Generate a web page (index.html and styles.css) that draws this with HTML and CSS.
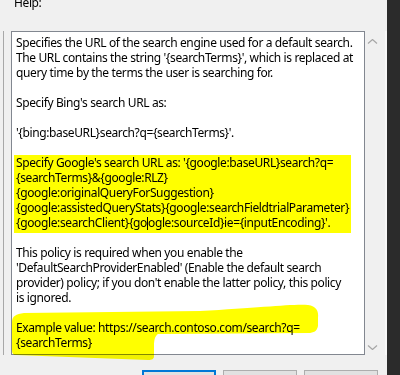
FILE: index.html
```html
<!DOCTYPE html>
<html>
<head>
<meta charset="utf-8">
<link rel="stylesheet" href="styles.css">
</head>
<body>
<div class="window">
  <div class="content">
    <div class="help-label">Help:</div>
    <div class="main">
      <div class="left-pane"></div>
      <div class="textbox">
        <p>Specifies the URL of the search engine used for a default search.<br>The URL contains the string '{searchTerms}', which is replaced at<br>query time by the terms the user is searching for.</p>
        <p>Specify Bing's search URL as:</p>
        <p>'{bing:baseURL}search?q={searchTerms}'.</p>
        <p class="marked">Specify Google's search URL as: '{google:baseURL}search?q=<br>{searchTerms}&amp;{google:RLZ}<br>{google:originalQueryForSuggestion}<br>{google:assistedQueryStats}{google:searchFieldtrialParameter}<br>{google:searchClient}{go<span class="caret"></span>ogle:sourceId}ie={inputEncoding}'.</p>
        <p>This policy is required when you enable the<br>'DefaultSearchProviderEnabled' (Enable the default search<br>provider) policy; if you don't enable the latter policy, this policy<br>is ignored.</p>
        <p>Example value: https://search.contoso.com/search?q=<br>{searchTerms}</p>
      </div>
      <div class="scroller">
        <svg class="chev" width="20" height="5" viewBox="0 0 20 5"><polyline points="3,4.5 7.5,0.5 12,4.5" fill="none" stroke="#a6a6a6" stroke-width="1.2"/></svg>
        <svg class="chev" width="20" height="5" viewBox="0 0 20 5"><polyline points="3,0.5 7.5,4.5 12,0.5" fill="none" stroke="#a6a6a6" stroke-width="1.2"/></svg>
      </div>
    </div>
    <div class="buttons">
      <div class="btn btn-default"></div>
      <div class="btn"></div>
      <div class="btn"></div>
    </div>
  </div>
  <div class="dark-strip"></div>
</div>
<svg class="brush" width="400" height="375" viewBox="0 0 400 375">
  <path d="M 12 322 C 12 316, 16 314, 24 313 L 200 311 C 260 308, 290 304, 308 305 C 316 306, 319 311, 318 318 L 318 326 C 317 331, 314 333, 308 333 L 158 334 C 155 336, 154 340, 154 346 L 154 356 C 154 359, 152 360, 148 360 L 16 355 C 13 355, 12 353, 12 350 Z" fill="#ffff00"/>
</svg>
</body>
</html>
```

FILE: styles.css
```css
html, body {
  margin: 0;
  padding: 0;
}
body {
  width: 400px;
  height: 375px;
  overflow: hidden;
  background: #f0f0f0;
  font-family: "Noto Sans", "Open Sans", sans-serif;
  font-size: 12px;
  letter-spacing: -0.38px;
  color: #000;
  position: relative;
}
.window {
  display: flex;
  height: 375px;
}
.content {
  width: 387px;
  display: flex;
  flex-direction: column;
}
.help-label {
  margin-top: -5px;
  padding-left: 14px;
  line-height: 15px;
  height: 15px;
}
.main {
  margin-top: 21px;
  display: flex;
  height: 324px;
}
.left-pane {
  width: 3px;
  border-right: 1px solid #a8a8a8;
  margin-right: 7px;
}
.textbox {
  border: 1px solid #828790;
  background: #fff;
  padding: 3px 0 0 4px;
  box-sizing: border-box;
  width: 354px;
  line-height: 15px;
  white-space: nowrap;
  overflow: hidden;
}
.textbox p {
  margin: 0 0 15px;
}
.textbox p.marked {
  width: fit-content;
  background: #ffff00;
  margin: 0 0 12px -2px;
  padding: 0 2px 3px 2px;
}
.caret {
  display: inline-block;
  width: 0;
  height: 13px;
  border-left: 1px solid #000;
  vertical-align: -3px;
}
.scroller {
  width: 20px;
  border-right: 2px solid #f8f8f8;
  display: flex;
  flex-direction: column;
  justify-content: space-between;
  padding: 8px 0 5px;
}
.chev {
  display: block;
}
.buttons {
  margin-top: 15px;
  padding-left: 142px;
  display: flex;
  gap: 7px;
}
.btn {
  width: 74px;
  height: 23px;
  box-sizing: border-box;
  border: 1px solid #adadad;
  background: #e1e1e1;
  flex: none;
}
.btn-default {
  border-color: #0078d7;
  box-shadow: inset 0 0 0 1px #0078d7;
}
.dark-strip {
  width: 13px;
  background: #2b2b2b;
}
.brush {
  position: absolute;
  left: 0;
  top: 0;
  pointer-events: none;
  mix-blend-mode: multiply;
}
```
